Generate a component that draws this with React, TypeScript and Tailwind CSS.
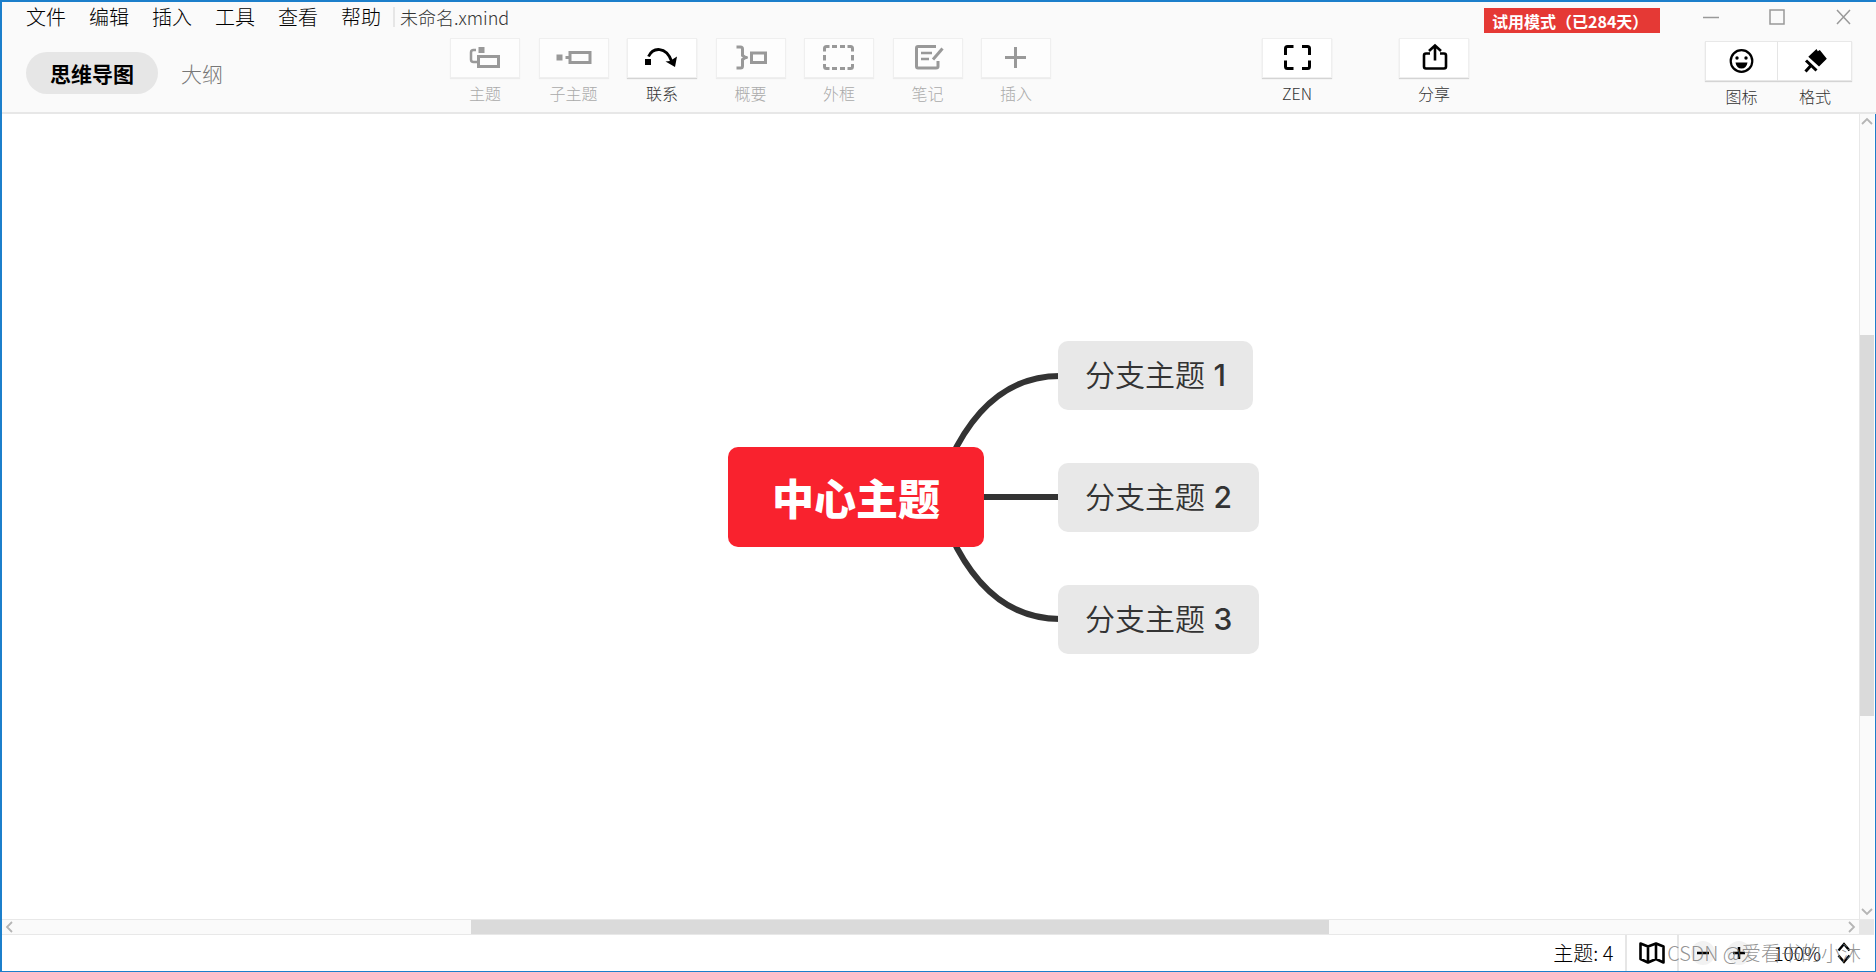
import type { ReactNode } from 'react';

const menus = ['文件', '编辑', '插入', '工具', '查看', '帮助'];

type Tool = { label: string; enabled?: boolean; icon: ReactNode };

const tools: Tool[] = [
  {
    label: '主题',
    icon: (
      <>
        <path d="M26 12H23.500Q21 12 21 14.500V21.500Q21 24 23.500 24H27" strokeWidth="2.500" />
        <rect x="28.500" y="18.500" width="20" height="10" />
        <rect x="28.500" y="9" width="6" height="6" fill="currentColor" stroke="none" />
      </>
    ),
  },
  {
    label: '子主题',
    icon: (
      <>
        <rect x="17.500" y="16.500" width="6" height="6" fill="currentColor" stroke="none" />
        <path d="M26.500 19.500H30" />
        <rect x="31" y="14.500" width="20" height="10" />
      </>
    ),
  },
  {
    label: '联系',
    enabled: true,
    icon: (
      <>
        <rect x="18" y="21" width="6" height="6" fill="currentColor" stroke="none" />
        <path d="M21.500 18.500C26 9 39 8 44.500 23" strokeWidth="2.800" />
        <path d="M38.500 23.500L43 23L50 18.500L48 29Z" fill="currentColor" stroke="none" />
      </>
    ),
  },
  {
    label: '概要',
    icon: (
      <>
        <path d="M20.500 9H24.500Q26.500 9 26.500 11V17.500L29.500 19.500L26.500 21.500V28Q26.500 30 24.500 30H20.500" />
        <path d="M28 19.500H31.500" />
        <rect x="35.500" y="15" width="14" height="9.500" />
      </>
    ),
  },
  {
    label: '外框',
    icon: (
      <path d="M20.500 13.500V10.500Q20.500 8.500 22.500 8.500H25.500M28 8.500H33M36 8.500H41M43.500 8.500H46.500Q48.500 8.500 48.500 10.500V13.500M48.500 17V22.500M48.500 26V28.500Q48.500 30.500 46.500 30.500H43.500M41 30.500H36M33 30.500H28M25.500 30.500H22.500Q20.500 30.500 20.500 28.500V26M20.500 22.500V17" />
    ),
  },
  {
    label: '笔记',
    icon: (
      <>
        <path d="M43 8.500H25Q23.500 8.500 23.500 10V28.500Q23.500 30 25 30H43Q45 30 45 28.500V23" />
        <path d="M28 15H39M28 21H36" strokeWidth="2.500" />
        <path d="M49.500 10.500L40 21.500" />
      </>
    ),
  },
  { label: '插入', icon: <path d="M24 19.500H45M34.500 9V30" /> },
];

const zen: Tool = {
  label: 'ZEN',
  enabled: true,
  icon: <path d="M23.500 17V10.500Q23.500 8.500 25.500 8.500H31.500M40 8.500H45.500Q47.500 8.500 47.500 10.500V17M47.500 22.500V28.500Q47.500 30.500 45.500 30.500H40M31.500 30.500H25.500Q23.500 30.500 23.500 28.500V22.500" />,
};

const share: Tool = {
  label: '分享',
  enabled: true,
  icon: (
    <path
      strokeWidth="2.600"
      d="M31 15.500H27Q25 15.500 25 17.500V28.500Q25 30.500 27 30.500H45Q47 30.500 47 28.500V17.500Q47 15.500 45 15.500H41M36 22.500V8M30 13L36 7.500L42 13"
    />
  ),
};

function Glyph({ children }: { children: ReactNode }) {
  return (
    <svg width="70" height="39" viewBox="0 1 70 39" className="shrink-0" fill="none" stroke="currentColor" strokeWidth="3" aria-hidden="true">
      {children}
    </svg>
  );
}

function ToolButton({ tool }: { tool: Tool }) {
  return (
    <button
      type="button"
      disabled={!tool.enabled}
      className={`flex w-[70px] flex-col items-center gap-[3px] ${tool.enabled ? 'text-[#333]' : 'text-[#aaa]'}`}
    >
      <span
        className={`flex h-10 w-full items-center justify-center border border-[#efefef] ${
          tool.enabled ? 'bg-white text-black shadow-[0_1px_1px_#d4d4d4]' : 'bg-[#fdfdfd] text-[#999] shadow-[0_1px_1px_#ececec]'
        }`}
      >
        <Glyph>{tool.icon}</Glyph>
      </span>
      <span className="text-base leading-6 font-light whitespace-nowrap">{tool.label}</span>
    </button>
  );
}

function Header() {
  return (
    <header className="flex h-[112px] items-start border-b-2 border-[#e7e7e7] bg-[#fafafa]">
      <div className="w-[448px] shrink-0 pl-6">
        <div className="flex h-[30px] items-center">
          <nav className="flex shrink-0 gap-[23px] text-xl leading-8 font-light whitespace-nowrap text-black">
            {menus.map((m) => (
              <button type="button" key={m}>{m}</button>
            ))}
          </nav>
          <span className="ml-3 h-5 w-0.5 shrink-0 bg-[#e6e6e6]" />
          <span className="ml-[5px] text-lg leading-8 font-light whitespace-nowrap text-[#333]">未命名.xmind</span>
        </div>
        <div className="mt-5 flex items-center gap-[23px] text-[21px] leading-[42px]">
          <button type="button" className="h-[42px] w-[132px] rounded-full bg-[#e6e6e6] font-bold text-black">思维导图</button>
          <button type="button" className="font-light text-[#777]">大纲</button>
        </div>
      </div>

      <div className="mt-9 flex w-[601px] shrink-0 justify-between">
        {tools.map((t) => (
          <ToolButton key={t.label} tool={t} />
        ))}
      </div>

      <div className="mt-9 mr-[15px] ml-auto flex gap-[67px]">
        <ToolButton tool={zen} />
        <ToolButton tool={share} />
      </div>

      <div className="flex w-[392px] shrink-0 flex-col">
        <div className="flex h-8 items-start">
          <span className="mt-1.5 h-[25px] w-44 bg-[#e53935] pl-2 text-base leading-[27px] font-bold whitespace-nowrap text-white">试用模式（已284天）</span>
          <div className="ml-auto flex h-8 gap-[46px] pr-[23px] text-[#999]">
            {[
              { name: '最小化', d: 'M0 10.500H16', w: 1.5 },
              { name: '最大化', d: 'M1 3H15V17H1Z', w: 1.5 },
              { name: '关闭', d: 'M2 3L15 17M15 3L2 17', w: 1.5 },
            ].map((b) => (
              <button type="button" key={b.name} aria-label={b.name} className="flex w-5 items-start justify-center pt-[5px]">
                <svg width="16" height="20" viewBox="0 0 16 20" fill="none" stroke="currentColor" strokeWidth={b.w}>
                  <path d={b.d} />
                </svg>
              </button>
            ))}
          </div>
        </div>
        <div className="mt-[7px] mr-6 ml-auto flex text-base font-light text-[#333]">
          <button type="button" className="flex w-[73px] flex-col items-center gap-[3px]">
            <span className="flex h-10 w-full items-center justify-center border border-[#e8e8e8] bg-white text-black shadow-[0_1px_1px_#d4d4d4]">
              <Glyph>
                <circle cx="34.500" cy="20" r="10.800" strokeWidth="2.200" />
                <circle cx="30" cy="17" r="1.700" fill="currentColor" stroke="none" />
                <circle cx="39" cy="17" r="1.700" fill="currentColor" stroke="none" />
                <path d="M28.500 21.500H40.500Q39.500 27.500 34.500 27.500T28.500 21.500Z" fill="currentColor" stroke="none" />
              </Glyph>
            </span>
            <span className="leading-6">图标</span>
          </button>
          <button type="button" className="flex w-[74px] flex-col items-center gap-[3px]">
            <span className="flex h-10 w-full items-center justify-center border border-l-0 border-[#e8e8e8] bg-white text-black shadow-[0_1px_1px_#d4d4d4]">
              <Glyph>
                <path d="M36.500 8L37.800 10.300L39.800 9L46.800 17.700L39 25.600L28.300 15.700Z" fill="currentColor" stroke="none" />
                <path d="M26 19.500L36.500 29.500M30.500 25L25.500 30.500" />
              </Glyph>
            </span>
            <span className="leading-6">格式</span>
          </button>
        </div>
      </div>
    </header>
  );
}

function MindMap() {
  return (
    <main className="relative min-w-0 flex-1 overflow-hidden bg-white">
      <svg className="absolute top-[220px] left-[940px]" width="120" height="320" fill="none" stroke="#333" strokeWidth="6" aria-hidden="true">
        <path d="M8 126Q47 42 118 42M30 163H118M8 200Q47 285 118 285" />
      </svg>
      <div className="absolute top-[333px] left-[726px] rounded-[10px] bg-[#f9222e] px-11 text-[42px] leading-[100px] font-black whitespace-nowrap text-white">
        中心主题
      </div>
      <div className="absolute top-[227px] left-[1056px] flex flex-col items-start gap-[53px] text-[30px] leading-[69px] whitespace-nowrap text-[#333]">
        {[1, 2, 3].map((n) => (
          <div key={n} className="rounded-[10px] bg-[#e8e8e8] px-[27px] font-[Inter,'Noto_Sans_CJK_SC',sans-serif] font-[350]">
            分支主题 <span className="font-medium">{n}</span>
          </div>
        ))}
      </div>
    </main>
  );
}

function Chevron({ d, label }: { d: string; label: string }) {
  return (
    <button type="button" aria-label={label} className="flex h-3.5 w-3.5 shrink-0 items-center justify-center">
      <svg width="12" height="12" viewBox="0 0 12 12" fill="none" stroke="#b5b5b5" strokeWidth="1.800">
        <path d={d} />
      </svg>
    </button>
  );
}

function StatusBar() {
  return (
    <footer className="relative flex h-9 items-center justify-end bg-white text-[19px] leading-9 text-black">
      <span className="mr-3 text-xl leading-9 font-light">主题: 4</span>
      <span className="h-full w-0.5 bg-[#e6e6e6]" />
      <button type="button" aria-label="导航" className="flex w-[50px] justify-center">
        <svg width="26" height="22" viewBox="0 0 26 22" fill="none" stroke="currentColor" strokeWidth="2.600" strokeLinejoin="round">
          <path d="M1.500 1.500L9 4.500L17 1.500L24.500 4.500V20.500L17 17L9 20.500L1.500 17ZM9 4.500V20.500M17 1.500V17" />
        </svg>
      </button>
      <span className="h-full w-0.5 bg-[#e6e6e6]" />
      <div className="flex items-center pr-6 pl-3">
        <button type="button" aria-label="缩小" className="flex size-6 items-center justify-center rounded-full bg-[#f2f2f2]">
          <svg width="12" height="12" stroke="currentColor" strokeWidth="2.500"><path d="M0 6H12" /></svg>
        </button>
        <button type="button" aria-label="放大" className="ml-3 flex size-6 items-center justify-center rounded-full bg-[#f2f2f2]">
          <svg width="12" height="12" stroke="currentColor" strokeWidth="2.500"><path d="M0 6H12M6 0V12" /></svg>
        </button>
        <button type="button" className="ml-[22px] flex items-center gap-4 font-light">
          100%
          <svg width="14" height="22" viewBox="0 0 14 22" fill="none" stroke="currentColor" strokeWidth="2.400">
            <path d="M1.500 8.500L7 2L12.500 8.500M1.500 13.500L7 20L12.500 13.500" />
          </svg>
        </button>
      </div>
      <span className="pointer-events-none absolute inset-y-0 right-3.5 text-xl leading-9 font-light whitespace-nowrap text-[#777]/80">CSDN @爱看书的小沐</span>
    </footer>
  );
}

export default function App() {
  return (
    <div className="flex h-screen flex-col border-t-2 border-b border-l-2 border-[#1c7fcb] bg-white font-['Noto_Sans_CJK_SC','Noto_Sans',sans-serif]">
      <Header />
      <div className="flex min-h-0 flex-1 flex-col border-r border-[#1c7fcb]">
        <div className="flex min-h-0 flex-1">
          <MindMap />
          <div className="mr-px flex w-[15px] flex-col items-center border-l border-[#e8e8e8] bg-[#fafafa]">
            <Chevron label="向上滚动" d="M1 9L6 4L11 9" />
            <div className="flex w-full flex-1 flex-col">
              <div className="flex-[207]" />
              <div className="w-full flex-[381] bg-[#dadada]" />
              <div className="flex-[189]" />
            </div>
            <Chevron label="向下滚动" d="M1 3L6 8L11 3" />
          </div>
        </div>
        <div className="mr-px flex h-4 border-y border-[#e8e8e8] bg-[#fafafa]">
          <Chevron label="向左滚动" d="M9 1L4 6L9 11" />
          <div className="flex flex-1">
            <div className="flex-[455]" />
            <div className="flex-[858] bg-[#dadada]" />
            <div className="flex-[516]" />
          </div>
          <Chevron label="向右滚动" d="M3 1L8 6L3 11" />
          <div className="w-[15px] bg-[#e6e6e6]" />
        </div>
        <StatusBar />
      </div>
    </div>
  );
}
